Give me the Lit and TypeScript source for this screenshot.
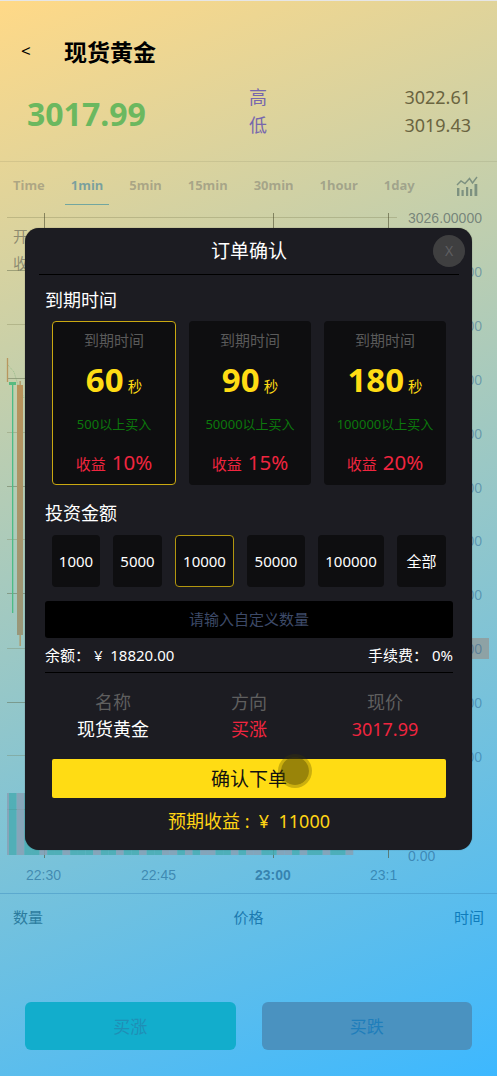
import { LitElement, html, css, svg, unsafeCSS } from "lit";
import { customElement } from "lit/decorators.js";

const FONT = `"Noto Sans", "Noto Sans CJK SC", sans-serif`;

@customElement("order-card")
class OrderCard extends LitElement {
  static properties = {
    secs: {}, min: {}, rate: {}, active: { type: Boolean, reflect: true },
  };
  secs = ""; min = ""; rate = ""; active = false;
  static styles = css`
    :host { display: flex; flex-direction: column; align-items: center; height: 164px; box-sizing: border-box;
      background: #0e0e10; border-radius: 4px; border: 1px solid transparent; }
    :host([active]) { border-color: #c9a811; }
    .k { font-size: 15px; line-height: 20px; color: #5a5a5a; margin-top: 8px; }
    .v { display: flex; align-items: baseline; gap: 4px; color: #ffdc14; margin-top: 7px; height: 46px; line-height: 46px; }
    .n { font-size: 33px; font-weight: 700; }
    .u { font-size: 14.5px; }
    .m { font-size: 13px; line-height: 20px; color: #0c780c; margin-top: 11px; }
    .r { display: flex; align-items: baseline; gap: 6px; color: #f0253f; margin-top: 13px; line-height: 30px; }
    .r b { font-weight: 400; font-size: 15px; }
    .r i { font-style: normal; font-size: 20.5px; }
  `;
  render() {
    return html`
      <div class="k">到期时间</div>
      <div class="v"><span class="n">${this.secs}</span><span class="u">秒</span></div>
      <div class="m">${this.min}以上买入</div>
      <div class="r"><b>收益</b><i>${this.rate}</i></div>`;
  }
}

@customElement("app-root")
class AppRoot extends LitElement {
  static styles = css`
    :host { display: block; position: relative; width: 497px; height: 1076px; overflow: hidden; box-sizing: border-box;
      border-top: 1px solid #e6e6e6; font-family: ${unsafeCSS(FONT)};
      background: linear-gradient(158deg, #ffd987 0%, #3db8ff 100%); }
    .top { display: flex; align-items: center; height: 39px; padding: 30px 0 0 21px; margin-bottom: 2px; }
    .back { width: 43px; font-size: 17px; color: #000; }
    .title { font-size: 23px; font-weight: 700; color: #000; }
    .stats { display: flex; align-items: center; height: 90px; box-sizing: border-box; padding: 0 26px 10px 27px; border-bottom: 1px solid rgba(120,120,90,.16); }
    .price { width: 222px; font-size: 32px; font-weight: 700; color: #6bb85f; padding-top: 4px; }
    .hl { flex: 1; display: grid; grid-template-columns: 1fr auto; font-size: 18px; line-height: 28px; color: #6a6440; margin-top: -2px; }
    .hl span:nth-child(odd) { color: #7767ad; }
    .tabs { display: flex; align-items: flex-start; height: 43px; padding: 0 19px 0 13px; gap: 26px; font-size: 13px; font-weight: 700; color: rgba(100,100,100,.42); }
    .tab { height: 43px; line-height: 46px; box-sizing: border-box; }
    .tab.on { color: rgba(20,110,160,.5); border-bottom: 1px solid rgba(30,130,160,.55); padding: 0 6px; margin: 0 -6px; }
    .ico { margin: 14px 0 0 auto; }
    .chart { display: block; margin-top: 8px; }
    .list { display: flex; justify-content: space-between; border-top: 1px solid rgba(60,140,190,.45); padding: 12px 13px 0; font-size: 15px; line-height: 22px; height: 96px; }
    .list span:nth-child(1) { color: #2c7c9e; }
    .list span:nth-child(2) { color: #1c7ab0; }
    .list span:nth-child(3) { color: #0f7cbc; }
    .btns { display: flex; padding: 0 25px; gap: 26px; }
    .btn { flex: 1; height: 48px; border-radius: 6px; text-align: center; line-height: 50px; font-size: 17px; }
    .up { background: #12adcc; color: #1f8fb6; }
    .down { background: #4a92c0; color: #1f7ebb; }

    .modal { position: absolute; left: 25px; top: 227px; width: 447px; height: 622px; box-sizing: border-box; background: #1c1c22;
      border-radius: 14px; color: #fff; box-shadow: 0 0 1px rgba(0,0,0,.6); padding: 0 19px 0 20px; }
    .mh { margin: 0 -6px; height: 46px; line-height: 47px; text-align: center; font-size: 19px; border-bottom: 1px solid #000; }
    .close { position: absolute; right: 7px; top: 7px; width: 32px; height: 32px; border-radius: 50%; background: #3f3f40; color: #5e5e60; font-size: 14px; line-height: 32px; text-align: center; }
    .sec { font-size: 18px; line-height: 24px; margin-top: 13px; }
    .cards { display: grid; grid-template-columns: 124px 122px 122px; justify-content: space-between; margin: 9px 7px 0; }
    .sec2 { font-size: 18px; line-height: 24px; margin-top: 16px; }
    .amts { display: grid; grid-template-columns: 48px 49px 59px 58px 66px 49px; justify-content: space-between; margin: 10px 7px 0; }
    .amt { height: 52px; box-sizing: border-box; line-height: 50px; text-align: center; background: #0e0e10; border: 1px solid transparent; border-radius: 4px; font-size: 15px; }
    .amt.on { border-color: #b2960f; }
    .inp { height: 37px; margin-top: 14px; background: #000; border-radius: 3px; text-align: center; line-height: 36px; color: #3d4a68; font-size: 15px; }
    .bal { display: flex; justify-content: space-between; height: 34px; line-height: 34px; font-size: 15px; border-bottom: 1px solid #000; }
    .info { display: grid; grid-template-columns: repeat(3, 136px); margin: 16px 0 0 0; justify-content: center; text-align: center; font-size: 18px; line-height: 27px; }
    .info .k { color: #5f5f5f; }
    .info .red { color: #f0253f; }
    .confirm { position: relative; height: 39px; margin: 16px 7px 0; background: #ffdc14; border-radius: 2px; color: #111; text-align: center; line-height: 40px; font-size: 19px; }
    .touch { position: absolute; left: 229px; top: -2px; width: 28px; height: 28px; border-radius: 50%; background: rgba(70,60,0,.55); box-shadow: 0 0 0 3px rgba(70,60,0,.28); }
    .exp { text-align: center; color: #ffd414; font-size: 18px; line-height: 27px; margin-top: 10px; white-space: pre; }
  `;

  chart() {
    const y0 = 213;
    const hs = [217, 270, 324, 378, 432, 486, 539, 593, 648, 702, 755, 809];
    const labels = ["3026.00000","3025.00000","3024.00000","3023.00000","3022.00000","3021.00000","3020.00000","3019.00000","3018.00000","3017.00000","3016.00000"];
    const teal = new Set([0, 2, 3, 5, 6, 8, 9, 10, 12, 13, 15, 16, 18, 19, 22, 24, 27, 28, 30, 33, 34, 37, 39, 40, 42, 43]);
    const bars = Array.from({ length: 45 }, (_, i) => i);
    return html`<svg class="chart" width="497" height="680" viewBox="0 ${y0} 497 680" font-family="Liberation Sans, sans-serif">
      <defs><linearGradient id="cd" x1="0" y1="0" x2="0" y2="1"><stop offset="0" stop-color="#b9925a"/><stop offset="1" stop-color="#98977a"/></linearGradient></defs>
      ${hs.map((y, i) => svg`<line x1="7" x2="397" y1=${y + .5} y2=${y + .5} stroke=${i % 2 ? "rgba(90,100,70,.45)" : "rgba(110,110,70,.28)"} />`)}
      ${[44, 273, 388].map(x => svg`<line x1=${x + .5} x2=${x + .5} y1="213" y2="858" stroke="rgba(80,80,50,.6)"/>`)}
      ${bars.map(i => svg`<rect x=${9 + i * 7.65} y="793" width="7.65" height="62" fill=${teal.has(i) ? "rgba(70,170,175,.8)" : "rgba(135,160,180,.85)"}/>`)}
      <rect x="7" y="793" width="2" height="62" fill="rgba(135,160,180,.85)"/>
      <text x="13" y="242" font-size="15" fill="rgba(90,90,80,.6)" font-family="Noto Sans CJK SC">开</text>
      <text x="13" y="269" font-size="15" fill="rgba(90,90,80,.6)" font-family="Noto Sans CJK SC">收</text>
      <polyline points="8,365 14,372 18,385 24,398" fill="none" stroke="rgba(110,170,110,.5)" stroke-dasharray="1 1"/>
      <line x1="7.5" x2="7.5" y1="358" y2="382" stroke="#b8965e" stroke-width="1.3"/>
      <rect x="12" y="382" width="1.3" height="231" fill="#4dbb85"/>
      <rect x="9" y="382" width="7" height="3" fill="#58bb80"/>
      <rect x="19.5" y="381" width="1.3" height="265" fill="#ad9463"/>
      <rect x="17" y="385" width="6" height="250" fill="url(#cd)"/>
      <rect x="472" y="638" width="17" height="21" fill="#8ea2a5"/>
      ${labels.map((t, i) => svg`<text x="408" y=${223 + i * 53.9} font-size="14" fill=${i == 0 ? "rgba(70,85,90,.62)" : "rgba(30,90,140,.45)"}>${t}</text>`)}
      <text x="408" y="861" font-size="14" fill="rgba(30,90,140,.55)">0.00</text>
      <text x="26" y="880" font-size="14" fill="rgba(20,90,140,.55)">22:30</text>
      <text x="141" y="880" font-size="14" fill="rgba(20,90,140,.55)">22:45</text>
      <text x="255" y="880" font-size="14" font-weight="700" fill="rgba(20,90,140,.6)">23:00</text>
      <text x="370" y="880" font-size="14" fill="rgba(20,90,140,.55)">23:1</text>
    </svg>`;
  }

  render() {
    const tabs = ["Time", "1min", "5min", "15min", "30min", "1hour", "1day"];
    return html`
      <div class="top"><span class="back">&lt;</span><span class="title">现货黄金</span></div>
      <div class="stats">
        <div class="price">3017.99</div>
        <div class="hl"><span>高</span><span>3022.61</span><span>低</span><span>3019.43</span></div>
      </div>
      <div class="tabs">
        ${tabs.map(t => html`<span class="tab ${t === "1min" ? "on" : ""}">${t}</span>`)}
        <svg class="ico" width="22" height="21" viewBox="0 0 22 21" fill="#7d9180">
          <rect x="1" y="12" width="2.4" height="8"/><rect x="5.5" y="14" width="2.2" height="6"/>
          <rect x="10" y="11" width="2.2" height="9"/><rect x="14" y="13" width="2.2" height="7"/>
          <rect x="18.5" y="8" width="2.8" height="12"/>
          <polyline points="1,9 5,5 9,7.5 13.5,2.5 16.5,7 21,1" fill="none" stroke="#7d9180" stroke-width="1.4"/>
        </svg>
      </div>
      ${this.chart()}
      <div class="list"><span>数量</span><span>价格</span><span>时间</span></div>
      <div class="btns"><div class="btn up">买涨</div><div class="btn down">买跌</div></div>
      <div class="modal">
        <div class="mh">订单确认</div>
        <div class="close">X</div>
        <div class="sec">到期时间</div>
        <div class="cards">
          <order-card secs="60" min="500" rate="10%" active></order-card>
          <order-card secs="90" min="50000" rate="15%"></order-card>
          <order-card secs="180" min="100000" rate="20%"></order-card>
        </div>
        <div class="sec2">投资金额</div>
        <div class="amts">
          <div class="amt">1000</div><div class="amt">5000</div><div class="amt on">10000</div>
          <div class="amt">50000</div><div class="amt">100000</div><div class="amt">全部</div>
        </div>
        <div class="inp">请输入自定义数量</div>
        <div class="bal"><span>余额：&nbsp;¥&nbsp;&nbsp;18820.00</span><span>手续费：&nbsp;0%</span></div>
        <div class="info">
          <span class="k">名称</span><span class="k">方向</span><span class="k">现价</span>
          <span>现货黄金</span><span class="red">买涨</span><span class="red">3017.99</span>
        </div>
        <div class="confirm">确认下单<div class="touch"></div></div>
        <div class="exp">预期收益 :  ¥  11000</div>
      </div>`;
  }
}
